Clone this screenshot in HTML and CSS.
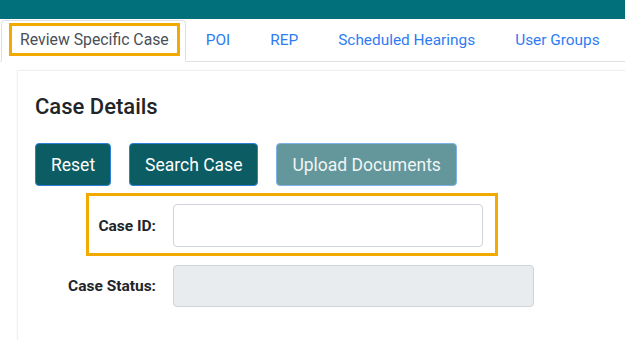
FILE: index.html
```html
<!DOCTYPE html>
<html lang="en">
  <head>
    <meta charset="UTF-8" />
    <meta name="viewport" content="width=device-width, initial-scale=1.0" />
    <title>Review Specific Case</title>
    <link rel="stylesheet" href="styles.css">
  </head>
  <body>
    <!-- Top bar -->
    <div class="topbar"></div>

    <!-- Tabs -->
    <ul class="tabs">
      <li class="tab active"><a href="#"><span class="focus-ring">Review Specific Case</span></a></li>
      <li class="tab"><a href="#">POI</a></li>
      <li class="tab"><a href="#">REP</a></li>
      <li class="tab"><a href="#">Scheduled Hearings</a></li>
      <li class="tab"><a href="#">User Groups</a></li>
    </ul>

    <!-- Case details card -->
    <div class="card">
      <h2>Case Details</h2>

      <div class="actions">
        <button class="btn">Reset</button>
        <button class="btn">Search Case</button>
        <button class="btn disabled">Upload Documents</button>
      </div>

      <div class="form-row highlight">
        <label for="caseId">Case ID:</label>
        <input type="text" id="caseId" class="case-id" />
      </div>

      <div class="form-row">
        <label for="caseStatus">Case Status:</label>
        <input type="text" id="caseStatus" class="case-status" disabled />
      </div>
    </div>
  </body>
</html>
```

FILE: styles.css
```css
* {
  margin: 0;
  padding: 0;
  box-sizing: border-box;
  font-family: Roboto, "Liberation Sans", sans-serif;
}

body {
  background-color: #fff;
  color: #212529;
  overflow: hidden;
}

.topbar {
  height: 19px;
  background-color: #02707b;
}

.tabs {
  list-style: none;
  display: flex;
  padding: 1px 0 0 1px;
  border-bottom: 1px solid #dee2e6;
}

.tab {
  flex-shrink: 0;
}

.tab a {
  display: flex;
  align-items: center;
  height: 100%;
  padding: 0 20px;
  font-size: 15.4px;
  line-height: 17px;
  color: #2f7cf2;
  text-decoration: none;
  white-space: nowrap;
}

.tab.active {
  border: 1px solid #dee2e6;
  border-bottom-color: #fff;
  border-radius: 4px 4px 0 0;
  margin-bottom: -1px;
  padding: 2px 5px 5px 7px;
  background: #fff;
}

.tab.active a {
  padding: 0;
  font-size: 15.8px;
  color: #495057;
}

.focus-ring {
  display: block;
  border: 3px solid #f2a900;
  padding: 5px 8px;
}

.card {
  margin: 8px -20px 0 17px;
  height: 290px;
  border: 1px solid #f0f0f0;
  box-shadow: 0 0 3px rgba(0, 0, 0, 0.04);
  padding: 24px 17px;
}

h2 {
  font-size: 22px;
  line-height: 24px;
  font-weight: 500;
  margin-bottom: 24px;
}

.actions {
  display: flex;
  gap: 18px;
  margin-bottom: 7px;
}

.btn {
  height: 43px;
  padding: 0 15px;
  font-size: 17.5px;
  color: #fff;
  background-color: #0b5c63;
  border: 1px solid #2f7fd8;
  border-radius: 4px;
  cursor: pointer;
}

.btn.disabled {
  background-color: #63979b;
  border-color: #7fb3ea;
  color: #f1f5f5;
  cursor: default;
}

.form-row {
  display: flex;
  align-items: center;
  gap: 17px;
}

.form-row label {
  width: 121px;
  text-align: right;
  font-size: 15.5px;
  font-weight: bold;
}

.form-row input {
  height: 42px;
  border: 1px solid #ced4da;
  border-radius: 4px;
  padding: 6px 12px;
  font-size: 15px;
}

.form-row.highlight {
  width: fit-content;
  margin: 0 0 9px 51px;
  border: 3px solid #f2a900;
  padding: 8px 12px 6px 8px;
}

.form-row.highlight label {
  width: 59px;
}

.case-id {
  width: 310px;
  height: 43px !important;
  background: #fff;
}

.case-status {
  width: 361px;
  background-color: #e9ecef;
}
```
